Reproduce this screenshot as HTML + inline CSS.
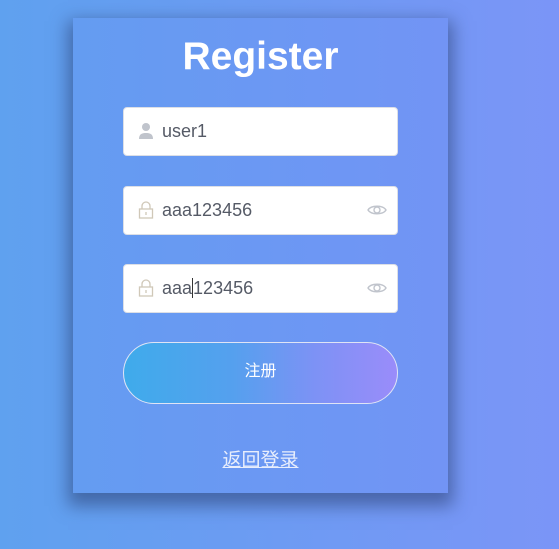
<!DOCTYPE html>
<html><head><meta charset="utf-8"><style>
*{margin:0;padding:0;box-sizing:border-box}
body{width:559px;height:549px;overflow:hidden;background:linear-gradient(90deg,#5fa1ef,#7b95f7);font-family:"Liberation Sans","Noto Sans CJK SC",sans-serif;position:relative}
.card{position:absolute;left:73px;top:18px;width:375px;height:475px;background:linear-gradient(90deg,#649cf1,#7294f5);box-shadow:0 8px 16px 5px rgba(40,60,110,.55)}
h1{position:absolute;left:0;width:100%;top:17px;text-align:center;color:#fff;font-size:39px;font-weight:bold;font-family:"Liberation Sans",sans-serif}
.inp{position:absolute;left:50px;width:275px;height:49px;background:#fff;border:1px solid #dcdfe6;border-radius:4px}
.inp span{position:absolute;left:38px;top:13px;font-size:18px;color:#555a66}
.inp svg{position:absolute}
.btn{position:absolute;left:50px;top:324px;width:275px;height:62px;border-radius:31px;border:1px solid #dfe4f5;background:linear-gradient(90deg,#3fabeb,#55a0ee 40%,#7d92f5 70%,#9a8cfa);color:#fff;text-align:center;line-height:58px;font-size:16px}
.link{position:absolute;left:0;width:100%;top:427px;text-align:center;color:#e8eefc;font-size:19px;text-decoration:underline}
</style></head><body>
<div class="card">
<h1>Register</h1>
<div class="inp" style="top:89px"><svg style="left:14px;top:14px" width="16" height="18" viewBox="0 0 16 18"><circle cx="8" cy="5" r="4" fill="#c0c4cc"/><path d="M1 17c0-5 3-6 7-6s7 1 7 6z" fill="#c0c4cc"/></svg><span>user1</span></div>
<div class="inp" style="top:168px"><svg style="left:14px;top:13px" width="16" height="20" viewBox="0 0 16 20"><path d="M4 9V6a4 4 0 018 0v3" fill="none" stroke="#d0c8b8" stroke-width="1.3"/><rect x="1.5" y="9" width="13" height="9" fill="none" stroke="#d0c8b8" stroke-width="1.3"/><path d="M8 12v3" stroke="#d0c8b8" stroke-width="1.3"/></svg><span>aaa123456</span><svg style="left:243px;top:16px" width="20" height="14" viewBox="0 0 20 14"><path d="M1 7C4 2 16 2 19 7 16 12 4 12 1 7z" fill="none" stroke="#c0c4cc" stroke-width="1.4"/><circle cx="10" cy="7" r="3" fill="none" stroke="#c0c4cc" stroke-width="1.4"/></svg></div>
<div class="inp" style="top:246px"><svg style="left:14px;top:13px" width="16" height="20" viewBox="0 0 16 20"><path d="M4 9V6a4 4 0 018 0v3" fill="none" stroke="#d0c8b8" stroke-width="1.3"/><rect x="1.5" y="9" width="13" height="9" fill="none" stroke="#d0c8b8" stroke-width="1.3"/><path d="M8 12v3" stroke="#d0c8b8" stroke-width="1.3"/></svg><span>aaa<span style="position:static;border-left:1px solid #333;margin-left:0"></span>123456</span><svg style="left:243px;top:16px" width="20" height="14" viewBox="0 0 20 14"><path d="M1 7C4 2 16 2 19 7 16 12 4 12 1 7z" fill="none" stroke="#c0c4cc" stroke-width="1.4"/><circle cx="10" cy="7" r="3" fill="none" stroke="#c0c4cc" stroke-width="1.4"/></svg></div>
<div class="btn">注册</div>
<div class="link">返回登录</div>
</div>
</body></html>
